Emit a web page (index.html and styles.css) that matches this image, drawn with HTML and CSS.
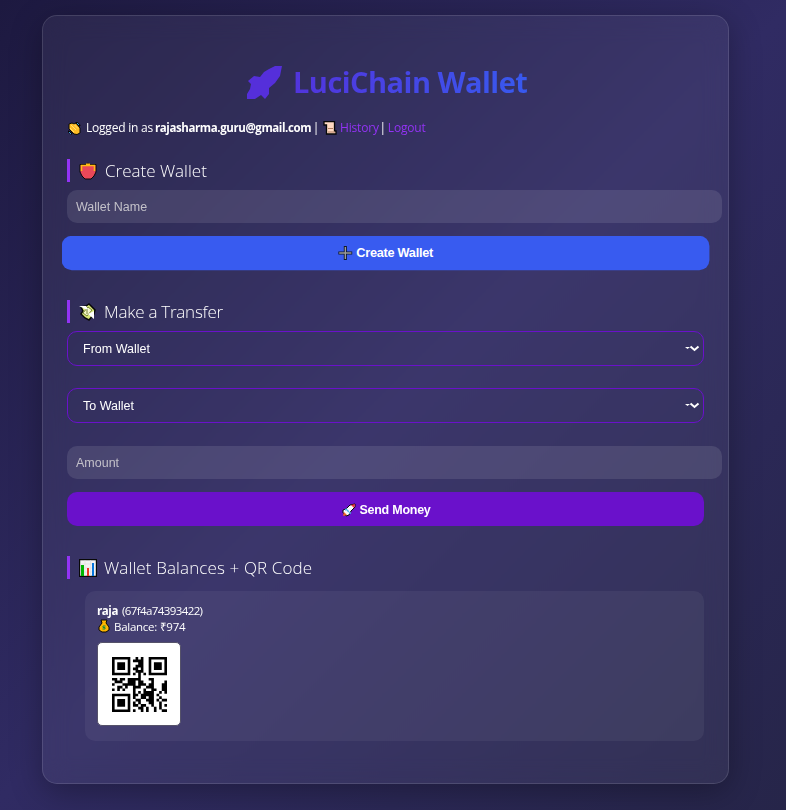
FILE: index.html
```html
<!DOCTYPE html>
<html lang="en">
<head>
<meta charset="utf-8">
<title>LuciChain Wallet</title>
<link rel="stylesheet" href="styles.css">
</head>
<body>
<main class="card">
  <h1 class="title">
    <svg class="title-icon" width="35" height="34" viewBox="0 0 35 34"><path fill="#552fda" d="M35 0H28L22 3L17 6L13 11L7 10L1 15L4 18L3 23L0 28V33H8L14 29L18 33L22 28V22L28 17L33 10Z"/></svg>
    <span>LuciChain Wallet</span>
  </h1>
  <p class="session">
    <svg class="wave" width="13" height="13" viewBox="0 0 13 13"><path d="M1 2l3-1 2 1 2-1 4 5v5l-3 1.500-3-.5-5-5z" fill="#ffbd24" stroke="#080808"/><path d="M3 3l5 5M6 2.500l4 4M2 6l4 4" stroke="#ffdf76"/><path d="M8 0l4 4M0 9l4 3" stroke="#080808" stroke-width="2"/><path d="M9 1l2 2M1 10l2 2" stroke="#39a8de"/></svg>
    <span class="logged">Logged in as</span> <b>rajasharma.guru@gmail.com</b> <span class="bar">|</span>
    <svg class="scroll" width="14" height="14" viewBox="0 0 14 14"><path d="M1 .7h10.500V10h1.500v3H3.500V4H1z" fill="#ffd9c2" stroke="#080808" stroke-width="1.300"/><path d="M5 7.500h5M5 11h7" stroke="#b17f62"/></svg>
    <a class="history">History</a><span class="bar">|</span><a class="logout">Logout</a>
  </p>

  <h2 class="heading"><svg width="18" height="18" viewBox="0 0 18 18"><path d="M1 2.500h6l2-1.500 2 1.500h6V10l-2 4-3 3H6l-3-3-2-4z" fill="#e94859" stroke="#080808"/><path d="M2.500 9V3.500h13V9" fill="none" stroke="#ffba16" stroke-width="1.500"/><path d="M7 2.500h4" stroke="#ffba16" stroke-width="2"/></svg><span class="h-create">Create Wallet</span></h2>
  <input class="field" type="text" placeholder="Wallet Name">
  <button class="button create"><svg width="14" height="14" viewBox="0 0 14 14"><path d="M7 0v14M0 7h14" stroke="#111827" stroke-width="3"/><path d="M7 1v12M1 7h12" stroke="#9b9b9b" stroke-width="1.300"/></svg><span>Create Wallet</span></button>

  <h2 class="heading transfer"><svg width="17" height="18" viewBox="0 0 17 18"><path d="M2 4l5-1 3-2 6 6-1 4-5 6-4-2-4-4 2-3z" fill="#d9e779" stroke="#080808" stroke-width="1.500"/><path d="M4 10l5-6 4 3-5 6z" fill="#f6f6c8" stroke="#758438"/><path d="M0 3l7 0 3 5-4-2zM9 11l6-3v8z" fill="#fff"/><path d="M8 6v5" stroke="#758438"/></svg><span class="h-transfer">Make a Transfer</span></h2>
  <div class="choice"><span>From Wallet</span><svg width="15" height="9" viewBox="0 0 15 9"><path d="M0 3h5l-2.500 2z" fill="#fff"/><path d="M5.500 2.500l4 3.500 4-3.500" fill="none" stroke="#fff" stroke-width="2"/></svg></div>
  <div class="choice to"><span>To Wallet</span><svg width="15" height="9" viewBox="0 0 15 9"><path d="M0 3h5l-2.500 2z" fill="#fff"/><path d="M5.500 2.500l4 3.500 4-3.500" fill="none" stroke="#fff" stroke-width="2"/></svg></div>
  <input class="field amount" type="text" placeholder="Amount">
  <button class="button send"><svg width="14" height="14" viewBox="0 0 14 14"><path d="M13 1l-5 1-4 4-3 1v3l2 1 1 2 3-1 2-4 4-4z" fill="#f7f9fb" stroke="#080808"/><path d="M13 1l-4 1 3 3z" fill="#ed3038"/><path d="M2 9l3 3-4 1z" fill="#f16425"/><path d="M5 7l2 2M3 7l2-1M8 11v-2" stroke="#49b9ee" stroke-width="1.500"/></svg><span>Send Money</span></button>

  <h2 class="heading balances"><svg width="18" height="18" viewBox="0 0 18 18"><path d="M.6.6h16.800v16.800H.6z" fill="#f3f3f3" stroke="#080808" stroke-width="1.200"/><path d="M1 5h16M1 9h16M1 13h16M6 1v16M11.500 1v16" stroke="#ddd" stroke-width=".6"/><path d="M2 6h3v11H2z" fill="#00b600"/><path d="M8 9h2v8H8z" fill="#ed3924"/><path d="M13 4h2v13h-2z" fill="#0776dc"/></svg><span class="h-balances">Wallet Balances + QR Code</span></h2>
  <section class="wallet">
    <div class="line"><b>raja</b><span class="id">(67f4a74393422)</span></div>
    <div class="line"><svg class="bag" width="12" height="14" viewBox="0 0 12 14"><path d="M3 1h6L8 4l3 4v3l-3 2H4l-3-2V8l3-4z" fill="#ffb600" stroke="#080808"/><path d="M7.500 7H5v1.500h2V10H4.500" fill="none" stroke="#148940"/></svg><span class="balance">Balance: ₹974</span></div>
    <div class="qr"><svg width="55" height="55" viewBox="0 0 21 21"><path stroke="#000" stroke-width="1.030" d="M9 .5h1m1 0h1M8 1.500h4M10 2.500h2M9 3.500h3M8 4.500h2m1 0h1M9 5.500h3M8 6.500h1m1 0h1m1 0h1M10 7.500h1M0 8.500h2m1 0h2m1 0h5m3 0h2M1 9.500h3m2 0h3m1 0h2m3 0h1m4 0h1M0 10.500h1m3 0h5m1 0h3m1 0h2m3 0h2M2 11.500h2m1 0h1m2 0h3m2 0h3m3 0h2M0 12.500h1m1 0h1m1 0h1m3 0h1m3 0h1m2 0h2m2 0h2M8 13.500h1m1 0h1m1 0h4m2 0h1m1 0h1M8 14.500h2m1 0h5m1 0h1M8 15.500h1m2 0h2m1 0h2m2 0h1M9 16.500h2m2 0h3m1 0h1m1 0h2M8 17.500h1m1 0h1m3 0h2m2 0h1M8 18.500h2m1 0h2m2 0h1m2 0h1m1 0h1M10 19.500h2m1 0h1m2 0h1m1 0h1M8 20.500h1m2 0h1m1 0h1m2 0h1m2 0h2"/><path fill="none" stroke="#000" d="M.5.5h6v6h-6zM14.500.5h6v6h-6zM.5 14.500h6v6h-6z"/><path d="M2 2h3v3H2zM16 2h3v3h-3zM2 16h3v3H2z"/></svg></div>
  </section>
</main>
</body>
</html>
```

FILE: styles.css
```css
* { box-sizing: border-box; }
body {
  margin: 0;
  height: 810px;
  overflow: hidden;
  padding: 15px 57px 26px 42px;
  color: #fff;
  font-family: "Open Sans", sans-serif;
  background: linear-gradient(135deg, #1d1940 0%, #302b63 50%, #262549 100%);
}
.card {
  width: 687px;
  height: 769px;
  padding: 48px 24px 0;
  border: 1px solid rgba(255,255,255,.12);
  border-radius: 15px;
  background: rgba(255,255,255,.055);
  backdrop-filter: blur(12px);
  box-shadow: 0 8px 32px rgba(0,0,0,.3);
}
.title {
  display: flex;
  align-items: center;
  margin: 0;
  height: 38px;
  padding-left: 180px;
  gap: 11px;
  font: 700 29px/36px "Open Sans", sans-serif;
  letter-spacing: -.52px;
  white-space: nowrap;
  color: transparent;
  background: linear-gradient(90deg, #6a11cb, #2575fc);
  -webkit-background-clip: text;
  background-clip: text;
}
.title span { padding-bottom: 2px; }
.session {
  display: flex;
  align-items: center;
  height: 20px;
  margin: 16px 0 0;
  font-size: 12px;
  line-height: 20px;
  white-space: nowrap;
}
.wave { margin: 0 5px 0 1px; }
.logged { letter-spacing: -.22px; }
.session b { margin: 0 2px 0 2px; font-size: 11.5px; letter-spacing: -.4px; }
.scroll { margin: 0 3px 0 4px; }
.session a { color: #9333f5; letter-spacing: -.18px; }
.history { margin-right: 1px; }
.logout { margin-left: 2px; }
.session .bar { display: flex; justify-content: center; width: 6px; }
.heading {
  display: flex;
  align-items: center;
  height: 23px;
  margin: 21px 0 8px;
  padding-left: 9px;
  border-left: 3px solid #9333f5;
  font: 300 17px/23px "Open Sans", sans-serif;
  white-space: nowrap;
}
.heading svg { margin-right: 8px; }
.h-transfer { letter-spacing: -.25px; }
.balances svg { margin-right: 7px; }
.h-balances { letter-spacing: .12px; }
.field {
  display: block;
  width: 655px;
  height: 33px;
  padding: 0 9px;
  border: 0;
  border-radius: 10px;
  background: rgba(255,255,255,.1);
  color: #fff;
  font: 12.500px "Liberation Sans", sans-serif;
}
.field::placeholder { color: #c3c1c9; opacity: 1; }
.button {
  display: flex;
  align-items: center;
  justify-content: center;
  gap: 4px;
  width: 637px;
  height: 34px;
  margin: 13px 0 0;
  padding: 0;
  border: 0;
  border-radius: 10px;
  color: #fff;
  background: #6a11cb;
  font: 700 12.500px "Liberation Sans", sans-serif;
  letter-spacing: -.25px;
}
.create { background: #385bf0; transform: scale(1.017); }
.send { padding: 2px 0 0 2px; gap: 3px; }
.transfer { margin-top: 30px; }
.choice {
  display: flex;
  align-items: center;
  justify-content: space-between;
  height: 35px;
  padding: 0 3px 0 15px;
  border: 1px solid #6a11cb;
  border-radius: 10px;
  font: 12.500px "Liberation Sans", sans-serif;
}
.to { margin-top: 22px; }
.amount { margin-top: 23px; }
.balances { margin: 30px 0 12px; }
.wallet {
  height: 150px;
  margin-left: 18px;
  padding: 11px 12px;
  border-radius: 10px;
  background: rgba(255,255,255,.05);
}
.line {
  display: flex;
  align-items: center;
  height: 16px;
  font-size: 12px;
  white-space: nowrap;
}
.line b { font-size: 11.5px; letter-spacing: -.4px; }
.id { margin-left: 4px; font-size: 11.5px; letter-spacing: -.6px; }
.balance { font-size: 11.5px; letter-spacing: -.28px; }
.bag { margin: 0 4px 0 1px; }
.qr {
  display: flex;
  align-items: center;
  justify-content: center;
  width: 84px;
  height: 84px;
  margin-top: 8px;
  border: 1px solid #555269;
  border-radius: 5px;
  background: #fff;
}
```
